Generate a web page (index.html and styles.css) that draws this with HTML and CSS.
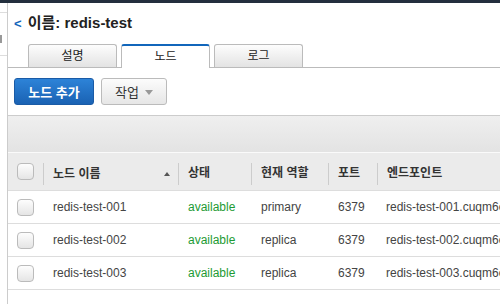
FILE: index.html
```html
<!DOCTYPE html>
<html lang="ko">
<head>
<meta charset="UTF-8">
<title>redis-test</title>
<link rel="stylesheet" href="styles.css">
</head>
<body>

<div class="topbar"></div>

<div class="layout">
    <!-- LEFT NAV EDGE -->
    <div class="side">
        <div class="side-line"></div>
        <div class="side-box"></div>
        <div class="side-line"></div>
    </div>

    <div class="main">
        <div class="title"><span class="back">&lt;</span> 이름: redis-test</div>

        <!-- TABS -->
        <div class="tabs">
            <div class="tab">설명</div>
            <div class="tab active">노드</div>
            <div class="tab">로그</div>
        </div>

        <!-- ACTIONS -->
        <div class="actions">
            <button class="btn btn-primary">노드 추가</button>
            <button class="btn">작업 <span class="caret"></span></button>
        </div>

        <div class="toolbar"></div>

        <!-- NODE TABLE -->
        <div class="table">
            <div class="row head">
                <div class="cell"><span class="check"></span></div>
                <div class="cell sep sortable">노드 이름 <span class="sort-up"></span></div>
                <div class="cell sep">상태</div>
                <div class="cell sep">현재 역할</div>
                <div class="cell sep">포트</div>
                <div class="cell sep">엔드포인트</div>
            </div>
            <div class="row">
                <div class="cell"><span class="check"></span></div>
                <div class="cell">redis-test-001</div>
                <div class="cell ok">available</div>
                <div class="cell">primary</div>
                <div class="cell">6379</div>
                <div class="cell endpoint">redis-test-001.cuqm6e.ng.0001.apn2.cache.amazonaws.com</div>
            </div>
            <div class="row">
                <div class="cell"><span class="check"></span></div>
                <div class="cell">redis-test-002</div>
                <div class="cell ok">available</div>
                <div class="cell">replica</div>
                <div class="cell">6379</div>
                <div class="cell endpoint">redis-test-002.cuqm6e.ng.0001.apn2.cache.amazonaws.com</div>
            </div>
            <div class="row">
                <div class="cell"><span class="check"></span></div>
                <div class="cell">redis-test-003</div>
                <div class="cell ok">available</div>
                <div class="cell">replica</div>
                <div class="cell">6379</div>
                <div class="cell endpoint">redis-test-003.cuqm6e.ng.0001.apn2.cache.amazonaws.com</div>
            </div>
        </div>
    </div>
</div>

</body>
</html>
```

FILE: styles.css
```css
body {
    margin: 0;
    width: 500px;
    height: 304px;
    overflow: hidden;
    background: #fff;
    color: #444;
    font-family: "Liberation Sans", "Noto Sans CJK KR", sans-serif;
    font-size: 12px;
}

.topbar {
    height: 3px;
    background: #232f3e;
}

.layout {
    display: flex;
    height: 301px;
}

/* LEFT NAV EDGE */
.side {
    width: 7px;
    flex-shrink: 0;
    border-right: 1px solid #ccc;
    padding-top: 9px;
}

.side-line {
    height: 1px;
    background: #ddd;
}

.side-box {
    width: 2px;
    height: 8px;
    background: #999;
    margin: 22px 0 12px;
}

.main {
    flex: 1;
    min-width: 0;
}

.title {
    height: 20px;
    line-height: 20px;
    margin-top: 10px;
    padding-left: 6px;
    font-size: 15px;
    font-weight: bold;
    color: #222;
}

.back {
    color: #1166bb;
    font-size: 13px;
    margin-right: 2px;
}

/* TABS */
.tabs {
    display: flex;
    gap: 4px;
    margin-top: 11px;
    padding-left: 20px;
    border-bottom: 1px solid #bbb;
}

.tab {
    width: 87px;
    height: 22px;
    line-height: 22px;
    text-align: center;
    color: #222;
    font-size: 12px;
    border: 1px solid #bbb;
    border-bottom: none;
    border-radius: 3px 3px 0 0;
    background: linear-gradient(#fdfdfd, #e3e3e3);
}

.tab.active {
    background: #fff;
    border-top: 2px solid #1166bb;
    height: 22px;
    margin-bottom: -1px;
    line-height: 22px;
}

/* ACTIONS */
.actions {
    display: flex;
    gap: 7px;
    margin-top: 10px;
    padding-left: 6px;
}

.btn {
    height: 27px;
    padding: 0 13px;
    font-family: inherit;
    font-size: 13px;
    color: #333;
    border: 1px solid #bbb;
    border-radius: 3px;
    background: linear-gradient(#fcfcfc, #e6e6e6);
    display: flex;
    align-items: center;
    gap: 6px;
}

.btn-primary {
    width: 80px;
    justify-content: center;
    color: #fff;
    font-weight: bold;
    border-color: #1a5ba6;
    background: linear-gradient(#2d83d8, #1a62b3);
}

.caret {
    width: 0;
    height: 0;
    border-left: 4px solid transparent;
    border-right: 4px solid transparent;
    border-top: 5px solid #999;
    margin-top: 2px;
}

.toolbar {
    margin-top: 10px;
    height: 36px;
    border-top: 1px solid #ccc;
    border-bottom: 1px solid #fafafa;
    background: linear-gradient(#efefef, #e3e3e3);
}

/* NODE TABLE */
.row {
    display: grid;
    grid-template-columns: 35px 135px 73px 77px 49px 1fr;
    align-items: center;
    height: 32px;
    border-bottom: 1px solid #ddd;
}

.row.head {
    height: 37px;
    background: #ebebeb;
    border-bottom: 1px solid #ddd;
    color: #333;
    font-weight: bold;
}

.cell {
    padding-left: 10px;
    white-space: nowrap;
    overflow: hidden;
}

.endpoint {
    padding-left: 9px;
}

.row .cell:first-child {
    padding-left: 9px;
    display: flex;
}

.head .sep {
    border-left: 1px solid #ccc;
    padding-left: 9px;
    height: 22px;
    line-height: 20px;
    margin-top: 4px;
}

.sortable {
    display: flex;
    align-items: center;
    justify-content: space-between;
    padding-right: 8px;
}

.sort-up {
    width: 0;
    height: 0;
    border-left: 3px solid transparent;
    border-right: 3px solid transparent;
    border-bottom: 4px solid #555;
}

.check {
    width: 15px;
    height: 15px;
    border: 1px solid #bbb;
    border-radius: 4px;
    background: linear-gradient(#fdfdfd, #e5e5e5);
}

.ok {
    color: #1d9b34;
}
```
